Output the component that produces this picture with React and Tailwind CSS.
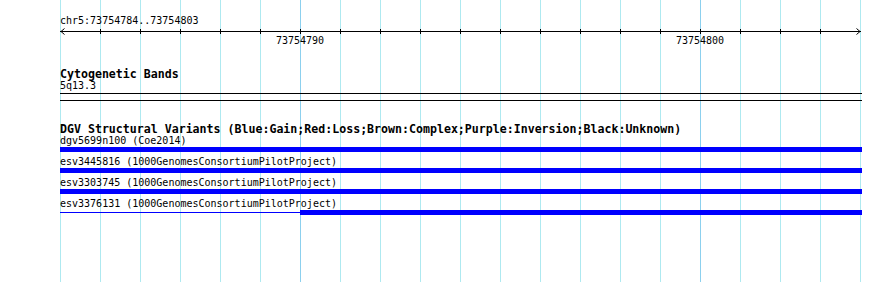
const GRID = Array.from({ length: 20 }, (_, i) => i);
const MAJOR = [6, 16];

const variants = [
  { id: "dgv5699n100", src: "Coe2014" },
  { id: "esv3445816", src: "1000GenomesConsortiumPilotProject" },
  { id: "esv3303745", src: "1000GenomesConsortiumPilotProject" },
  { id: "esv3376131", src: "1000GenomesConsortiumPilotProject", partial: true },
];

function Ruler() {
  const ticks = Array.from({ length: 19 }, (_, i) => (i + 1) * 40 + 0.5);
  return (
    <svg width="802" height="8" className="block" shapeRendering="crispEdges">
      <rect x="0" y="4" width="801" height="1" fill="#000" />
      {ticks.map((x) => (
        <line key={x} x1={x} y1="2" x2={x} y2="7" stroke="#000" strokeWidth="1" />
      ))}
      <polyline points="4.5,1.5 1,4.5 4.5,7.5" fill="none" stroke="#000" strokeWidth="1" shapeRendering="auto" />
      <polyline points="796.5,1.5 800,4.5 796.5,7.5" fill="none" stroke="#000" strokeWidth="1" shapeRendering="auto" />
    </svg>
  );
}

export default function App() {
  return (
    <div className="relative h-[282px] w-[890px] overflow-hidden bg-white text-black font-['DejaVu_Sans_Mono',monospace]">
      {/* grid */}
      <div className="absolute inset-0 flex pl-[60px]">
        {GRID.map((i) => (
          <div
            key={i}
            className={`w-[40px] shrink-0 border-l ${MAJOR.includes(i) ? "border-[#8cd0ee]" : "border-[#aee9f0]"}`}
          />
        ))}
        <div className="w-0 border-l border-[#aee9f0]" />
      </div>

      <div className="relative w-[862px] pl-[60px]">
        <div className="pt-[15px] text-[10px] leading-[12px]">chr5:73754784..73754803</div>
        <Ruler />
        <div className="relative h-[12px] text-[10px] leading-[12px]">
          <span className="absolute left-[240px] top-0 -translate-x-1/2">73754790</span>
          <span className="absolute left-[640px] top-0 -translate-x-1/2">73754800</span>
        </div>

        <div className="mt-[22px] text-[11.6px] font-bold leading-[11px]">Cytogenetic Bands</div>
        <div className="text-[10px] leading-[12px]">5q13.3</div>
        <div className="mt-[1px] h-px bg-black" />
        <div className="mt-[6px] h-px bg-black" />

        <div className="mt-[23px] text-[11.6px] font-bold leading-[10px] whitespace-nowrap">
          DGV Structural Variants (Blue:Gain;Red:Loss;Brown:Complex;Purple:Inversion;Black:Unknown)
        </div>
        {variants.map((v) => (
          <div key={v.id} className="mb-[3px]">
            <div className="text-[10px] leading-[13px] whitespace-nowrap">
              {v.id} ({v.src})
            </div>
            {v.partial ? (
              <div className="flex h-[5px] items-center">
                <div className="h-px w-[240px] bg-[#0000ff]" />
                <div className="h-full flex-1 bg-[#0000ff]" />
              </div>
            ) : (
              <div className="h-[5px] bg-[#0000ff]" />
            )}
          </div>
        ))}
      </div>
    </div>
  );
}
